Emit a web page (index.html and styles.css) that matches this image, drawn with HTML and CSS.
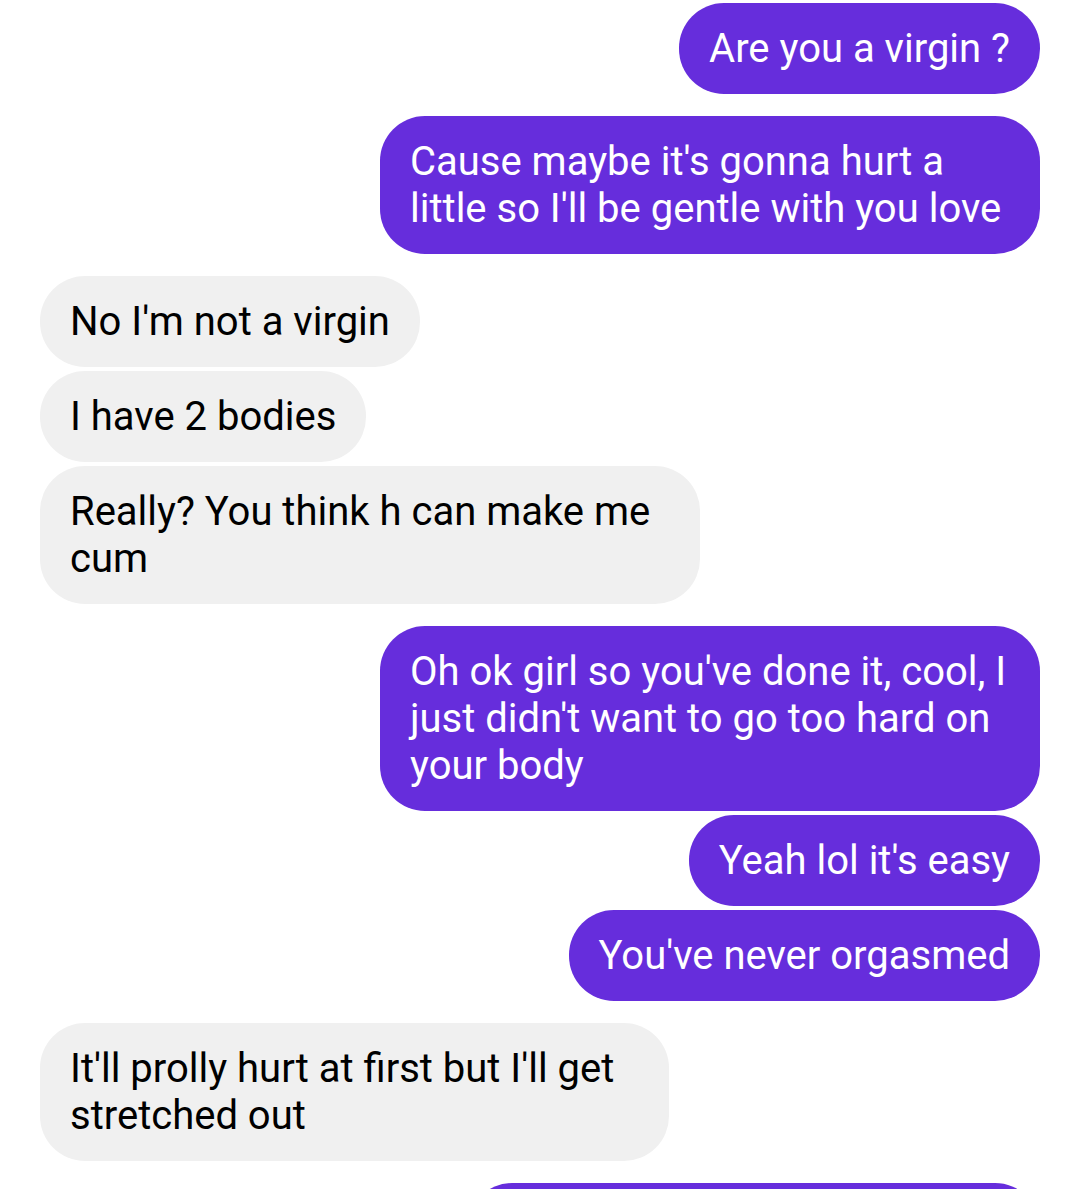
FILE: index.html
```html
<!DOCTYPE html>
<html lang="en">
<head>
    <meta charset="UTF-8">
    <meta name="viewport" content="width=device-width, initial-scale=1.0">
    <title>Chat</title>
    <link rel="stylesheet" href="styles.css">
</head>
<body>
    <div class="chat">
        <!-- me -->
        <div class="msg sent">Are you a virgin ?</div>
        <div class="msg sent group">Cause maybe it's gonna hurt a little so I'll be gentle with you love</div>

        <!-- her -->
        <div class="msg received group">No I'm not a virgin</div>
        <div class="msg received">I have 2 bodies</div>
        <div class="msg received">Really? You think h can make me cum</div>

        <!-- me -->
        <div class="msg sent group">Oh ok girl so you've done it, cool, I just didn't want to go too hard on your body</div>
        <div class="msg sent">Yeah lol it's easy</div>
        <div class="msg sent">You've never orgasmed</div>

        <!-- her -->
        <div class="msg received group narrow">It'll prolly hurt at first but I'll get stretched out</div>

        <!-- next one, cut off by the screen -->
        <div class="msg sent group cut"></div>
    </div>
</body>
</html>
```

FILE: styles.css
```css
body {
    margin: 0;
    padding: 0;
    background-color: #fff;
    font-family: Roboto, "Noto Sans", Arial, sans-serif;
    overflow: hidden;
}
.chat {
    display: flex;
    flex-direction: column;
    gap: 4px;
    padding: 3px 40px;
}
.msg {
    box-sizing: border-box;
    max-width: 660px;
    padding: 22px 30px;
    border-radius: 45px;
    font-size: 40px;
    line-height: 47px;
}
.msg.sent {
    align-self: flex-end;
    background-color: #662ddc;
    color: #fff;
}
.msg.received {
    align-self: flex-start;
    background-color: #f0f0f0;
    color: #000;
}
.msg.group {
    margin-top: 18px;
}
.msg.narrow {
    max-width: 629px;
}
.msg.cut {
    width: 573px;
    height: 91px;
}
```
